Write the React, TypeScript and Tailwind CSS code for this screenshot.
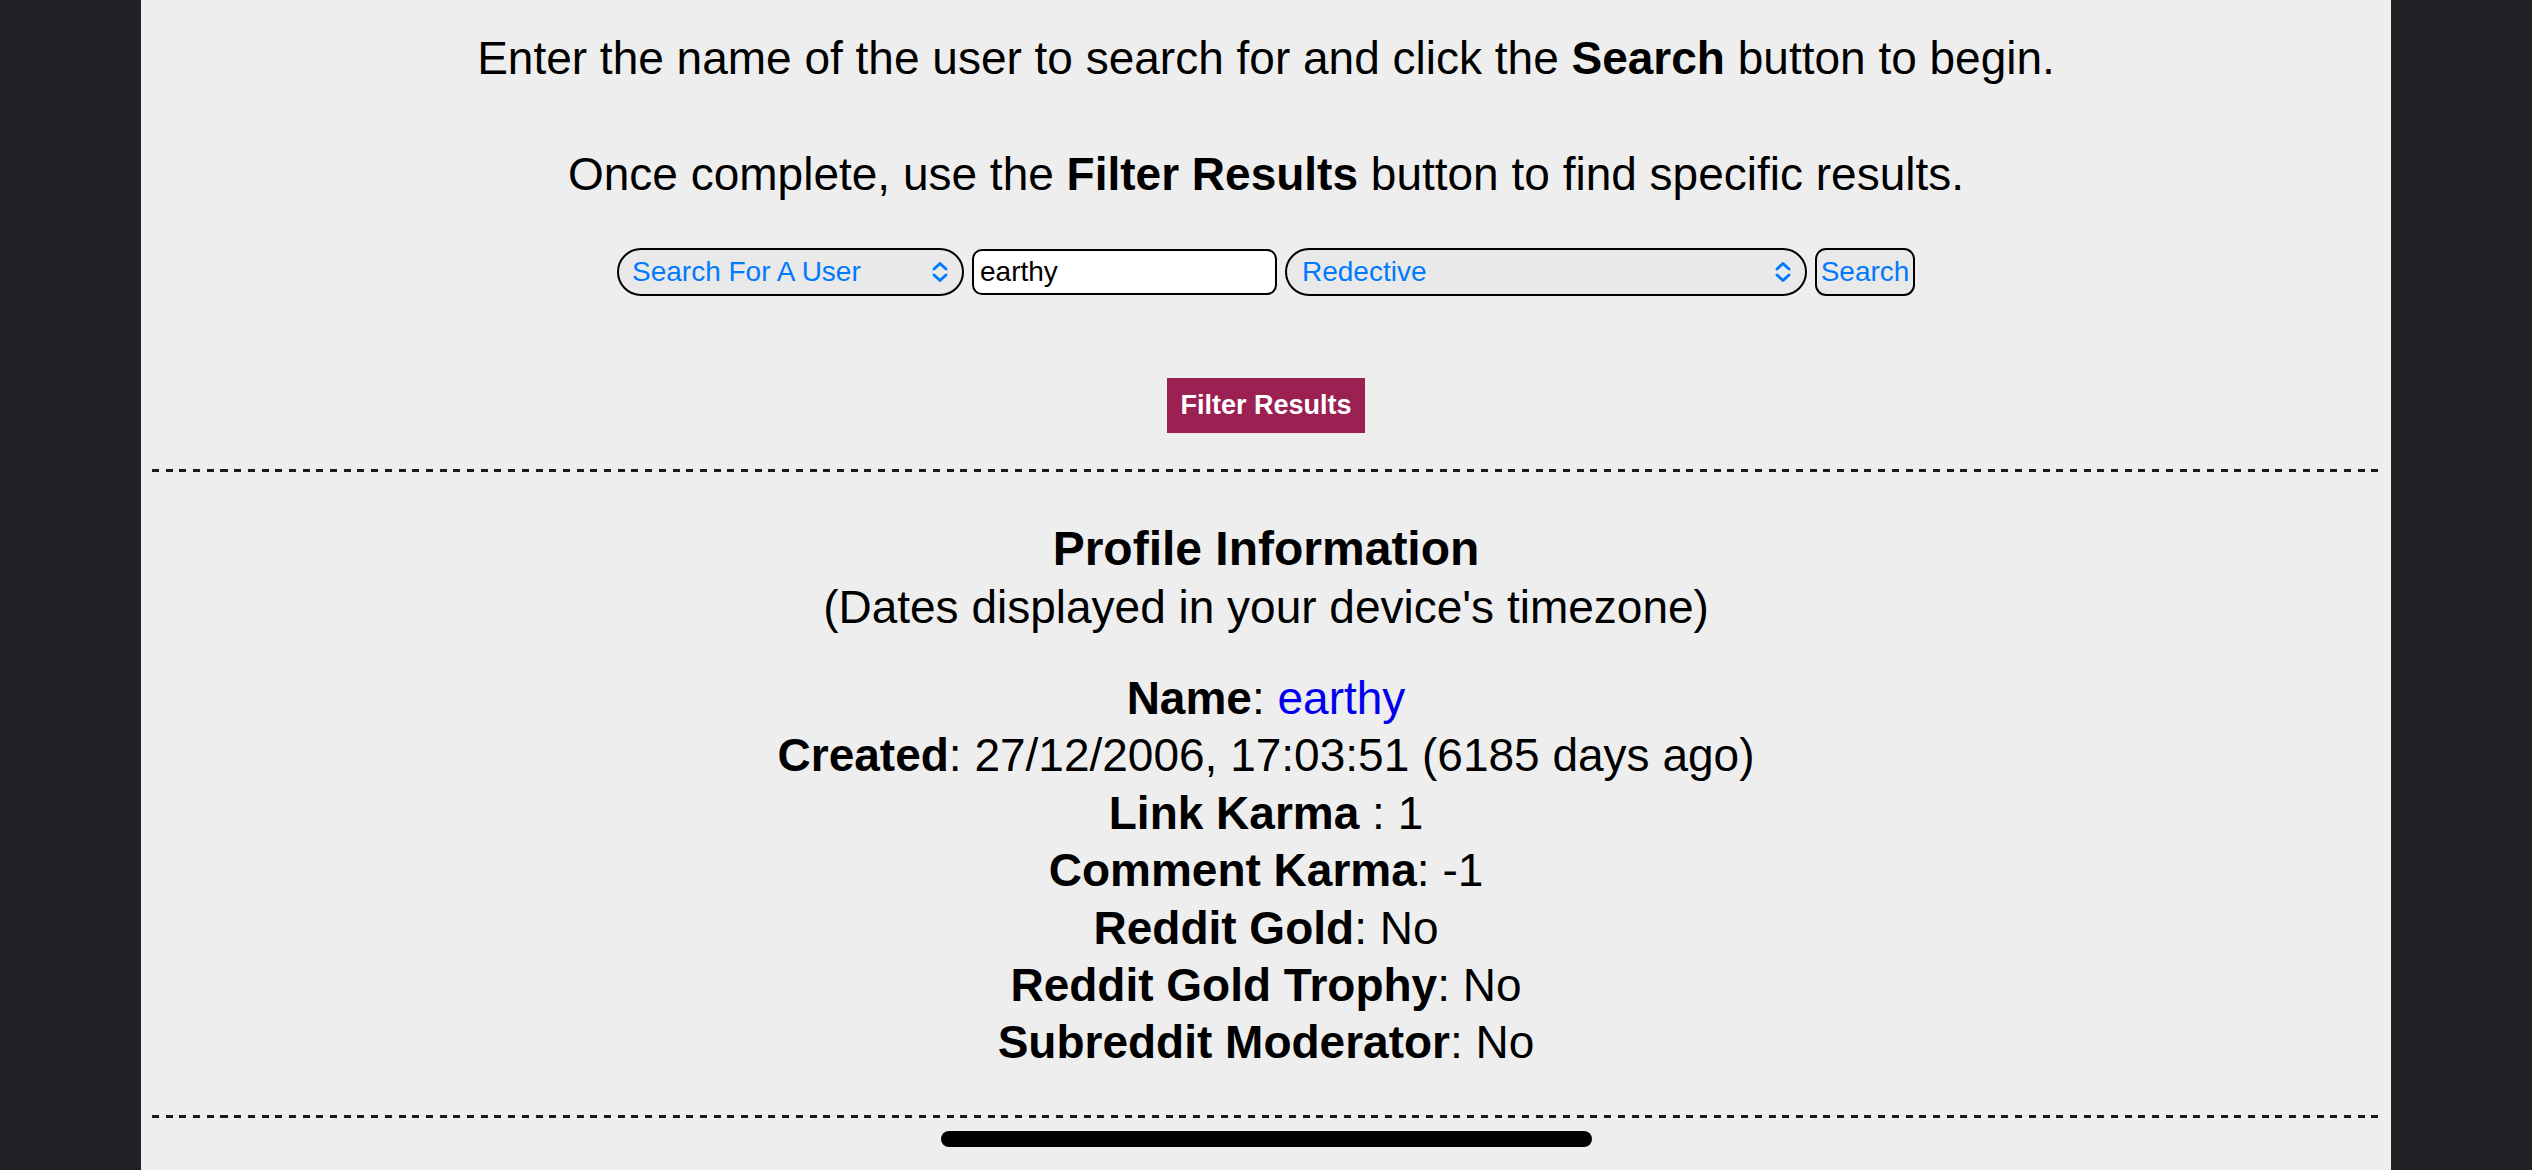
import React from "react";

function Chevrons() {
  return (
    <svg width="20" height="24" viewBox="0 0 20 24" fill="none" stroke="#007aff" strokeWidth="3" strokeLinecap="round" strokeLinejoin="round">
      <path d="M4 9 L10 3.5 L16 9" />
      <path d="M4 15 L10 20.5 L16 15" />
    </svg>
  );
}

function Row({ label, value, blue }: { label: string; value: string; blue?: boolean }) {
  return (
    <div className="leading-[57.4px]">
      <span className="font-bold">{label}</span>
      {label === "Link Karma" ? " : " : ": "}
      <span className={blue ? "text-[#0000ee]" : ""}>{value}</span>
    </div>
  );
}

export default function App() {
  return (
    <div className="relative w-[2532px] h-[1170px] overflow-hidden bg-[#212226] flex justify-center font-['Liberation_Sans',Arial,sans-serif] text-black">
      <div className="w-[2250px] h-full bg-[#eeeeee] px-[11px] pt-[29px] flex flex-col items-center">
        <p className="text-[46px] leading-[58px] text-center">
          Enter the name of the user to search for and click the <b>Search</b> button to begin.
          <br />
          <br />
          Once complete, use the <b>Filter Results</b> button to find specific results.
        </p>

        <div className="mt-[45px] flex items-center gap-[8px] text-[28px] leading-none">
          <div className="w-[347px] h-[48px] rounded-full border-2 border-black bg-[#e9e9e9] flex items-center justify-between pl-[13px] pr-[12px]">
            <span className="text-[#007aff]">Search For A User</span>
            <Chevrons />
          </div>
          <div className="w-[305px] h-[46px] rounded-[10px] border-2 border-black bg-white flex items-center pl-[6px]">
            <span>earthy</span>
          </div>
          <div className="w-[522px] h-[48px] rounded-full border-2 border-black bg-[#e9e9e9] flex items-center justify-between pl-[15px] pr-[12px]">
            <span className="text-[#007aff]">Redective</span>
            <Chevrons />
          </div>
          <div className="w-[100px] h-[48px] rounded-[11px] border-2 border-black bg-[#e9e9e9] flex items-center justify-center">
            <span className="text-[#007aff]">Search</span>
          </div>
        </div>

        <div className="mt-[82px] w-[198px] h-[55px] bg-[#9b2152] flex items-center justify-center text-white font-bold text-[27px]">
          Filter Results
        </div>

        <div className="mt-[36px] w-full h-[3px] bg-[repeating-linear-gradient(90deg,#1a1a1a_0px,#1a1a1a_7px,transparent_7px,transparent_13.7px)]" />

        <div className="mt-[48px] text-[48px] leading-[58px] font-bold text-center">Profile Information</div>
        <div className="text-[46px] leading-[58px] text-center">(Dates displayed in your device's timezone)</div>

        <div className="mt-[34px] text-[46px] text-center">
          <Row label="Name" value="earthy" blue />
          <Row label="Created" value="27/12/2006, 17:03:51 (6185 days ago)" />
          <Row label="Link Karma" value="1" />
          <Row label="Comment Karma" value="-1" />
          <Row label="Reddit Gold" value="No" />
          <Row label="Reddit Gold Trophy" value="No" />
          <Row label="Subreddit Moderator" value="No" />
        </div>

        <div className="mt-[43px] w-full h-[3px] bg-[repeating-linear-gradient(90deg,#1a1a1a_0px,#1a1a1a_7px,transparent_7px,transparent_13.7px)]" />
      </div>

      <div className="absolute left-[941px] bottom-[23px] w-[651px] h-[16px] rounded-full bg-black" />
    </div>
  );
}
